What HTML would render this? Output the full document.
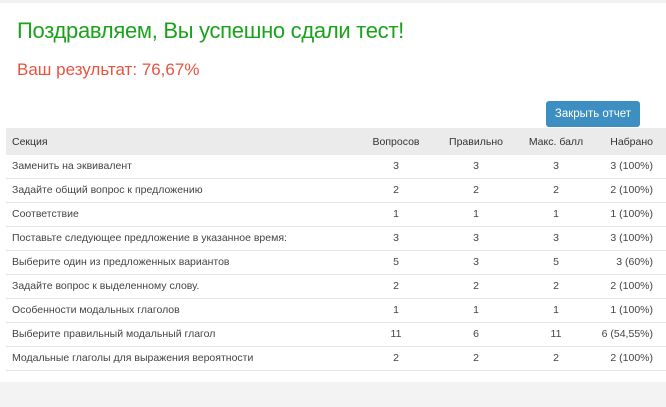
<!DOCTYPE html>
<html><head><meta charset="utf-8"><style>
body{margin:0;width:666px;height:407px;background:#fff;font-family:"Liberation Sans",sans-serif;position:relative;overflow:hidden}
.top{position:absolute;left:0;top:0;width:666px;height:3px;background:#f1f1f1}
.bot{position:absolute;left:0;top:382px;width:666px;height:25px;background:#f3f3f3}
h1{position:absolute;left:17px;top:18px;margin:0;font-weight:normal;font-size:22px;color:#1aa31a;letter-spacing:-0.3px}
h2{position:absolute;left:17px;top:60px;margin:0;font-weight:normal;font-size:17px;color:#e8533f}
.btn{position:absolute;left:546px;top:101px;width:94px;height:26px;background:#3d8fc2;border-radius:3px;color:#fff;font-size:11.5px;line-height:26px;text-align:center}
table{position:absolute;left:6px;top:128px;width:660px;border-collapse:collapse;font-size:10.5px;color:#444;table-layout:fixed}
th{background:#ebebeb;font-weight:normal;height:27px;padding:0;color:#333;text-align:center}
td{height:23px;padding:0;line-height:23px;border-bottom:1px solid #dfe8e8;text-align:center}
th:first-child,td:first-child{text-align:left;padding-left:6px}
th:last-child,td:last-child{text-align:right;padding-right:13px}
</style></head><body>
<div class="top"></div>
<h1>Поздравляем, Вы успешно сдали тест!</h1>
<h2>Ваш результат: 76,67%</h2>
<div class="btn">Закрыть отчет</div>
<table>
<colgroup><col style="width:350px"><col style="width:80px"><col style="width:80px"><col style="width:80px"><col></colgroup>
<tr><th>Секция</th><th>Вопросов</th><th>Правильно</th><th>Макс. балл</th><th>Набрано</th></tr>
<tr><td>Заменить на эквивалент</td><td>3</td><td>3</td><td>3</td><td>3 (100%)</td></tr>
<tr><td>Задайте общий вопрос к предложению</td><td>2</td><td>2</td><td>2</td><td>2 (100%)</td></tr>
<tr><td>Соответствие</td><td>1</td><td>1</td><td>1</td><td>1 (100%)</td></tr>
<tr><td>Поставьте следующее предложение в указанное время:</td><td>3</td><td>3</td><td>3</td><td>3 (100%)</td></tr>
<tr><td>Выберите один из предложенных вариантов</td><td>5</td><td>3</td><td>5</td><td>3 (60%)</td></tr>
<tr><td>Задайте вопрос к выделенному слову.</td><td>2</td><td>2</td><td>2</td><td>2 (100%)</td></tr>
<tr><td>Особенности модальных глаголов</td><td>1</td><td>1</td><td>1</td><td>1 (100%)</td></tr>
<tr><td>Выберите правильный модальный глагол</td><td>11</td><td>6</td><td>11</td><td>6 (54,55%)</td></tr>
<tr><td>Модальные глаголы для выражения вероятности</td><td>2</td><td>2</td><td>2</td><td>2 (100%)</td></tr>
</table>
<div class="bot"></div>
</body></html>
